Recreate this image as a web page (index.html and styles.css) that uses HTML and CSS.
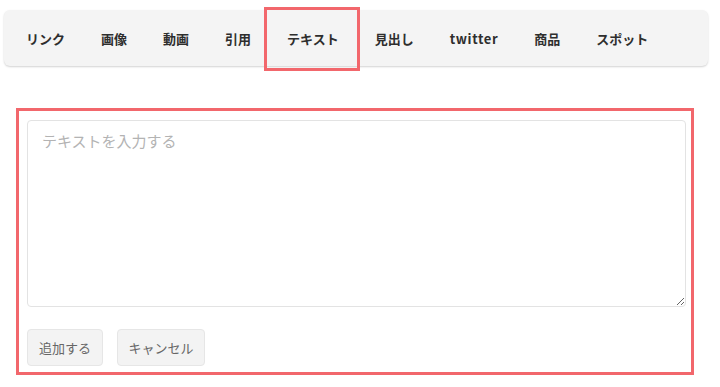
FILE: index.html
```html
<!DOCTYPE html>
<html lang="ja">
<head>
<meta charset="utf-8">
<title>Editor</title>
<link rel="stylesheet" href="styles.css">
</head>
<body>
<div class="page">
  <nav class="tabs">
    <div class="tab">リンク</div>
    <div class="tab">画像</div>
    <div class="tab">動画</div>
    <div class="tab">引用</div>
    <div class="tab tab-active">テキスト</div>
    <div class="tab">見出し</div>
    <div class="tab tab-latin">twitter</div>
    <div class="tab">商品</div>
    <div class="tab">スポット</div>
  </nav>
  <form class="editor">
    <textarea class="editor-input" placeholder="テキストを入力する"></textarea>
    <div class="actions">
      <button type="button" class="btn btn-add">追加する</button>
      <button type="button" class="btn btn-cancel">キャンセル</button>
    </div>
  </form>
</div>
</body>
</html>
```
FILE: styles.css
```css
* { box-sizing: border-box; }
html, body {
  margin: 0;
  padding: 0;
  background: #fff;
  font-family: "Noto Sans CJK JP", "Noto Sans", "Liberation Sans", sans-serif;
}
.page {
  padding: 10px 0 0 4px;
}
.tabs {
  display: flex;
  align-items: stretch;
  width: 704px;
  height: 56px;
  padding: 0 4px;
  background: #f4f4f4;
  border-radius: 6px;
  box-shadow: 0 1px 2px rgba(0, 0, 0, 0.18);
}
.tab {
  position: relative;
  display: flex;
  align-items: center;
  padding: 1px 18px 0;
  font-size: 13px;
  font-weight: bold;
  color: #2e2e2e;
  line-height: 1;
}
.tab-latin {
  letter-spacing: 0.6px;
}
.tab-active::after {
  content: "";
  position: absolute;
  top: -3px;
  bottom: -5px;
  left: -5px;
  right: -3px;
  border: 3px solid #f2676c;
}
.editor {
  margin: 42px 0 0 12px;
  width: 678px;
  height: 267px;
  border: 3px solid #f2676c;
  padding: 9px 5px 0 8px;
}
.editor-input {
  display: block;
  width: 659px;
  height: 187px;
  margin: 0;
  padding: 9px 14px;
  border: 1px solid #e3e3e3;
  border-radius: 4px;
  font-family: inherit;
  font-size: 15px;
  color: #333;
  resize: vertical;
  outline: none;
}
.editor-input::placeholder {
  color: #b3b3b3;
}
.actions {
  display: flex;
  gap: 14px;
  margin-top: 22px;
}
.btn {
  height: 37px;
  padding: 0;
  white-space: nowrap;
  background: #f3f3f3;
  border: 1px solid #e6e6e6;
  border-radius: 4px;
  font-family: inherit;
  font-size: 13px;
  color: #666;
}
.btn-add { width: 76px; }
.btn-cancel { width: 88px; }
```
